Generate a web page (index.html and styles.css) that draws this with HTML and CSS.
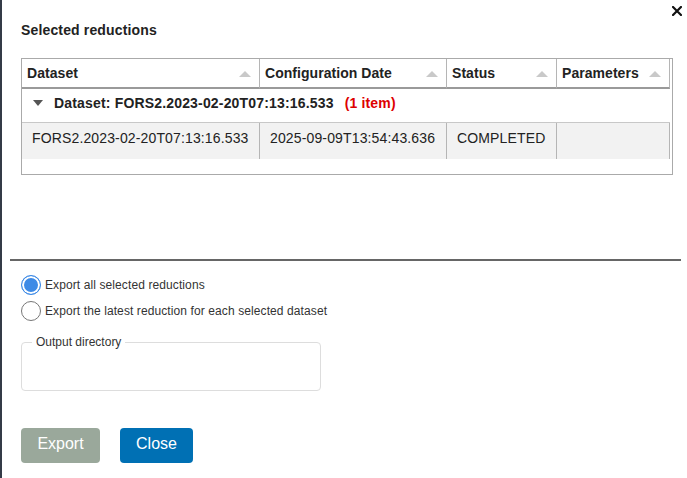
FILE: index.html
```html
<!DOCTYPE html>
<html>
<head>
<meta charset="utf-8">
<link rel="stylesheet" href="styles.css">
</head>
<body>
<div class="dialog">
  <button class="close-x" aria-label="close">
    <svg width="10" height="10" viewBox="0 0 10 10"><path d="M1 1L9 9M9 1L1 9" stroke="#111" stroke-width="2.2" stroke-linecap="square"/></svg>
  </button>
  <h2 class="title">Selected reductions</h2>
  <div class="grid-wrap">
    <div class="grid">
      <div class="hcell"><span>Dataset</span><i class="sort"></i></div>
      <div class="hcell"><span>Configuration Date</span><i class="sort"></i></div>
      <div class="hcell"><span>Status</span><i class="sort"></i></div>
      <div class="hcell"><span>Parameters</span><i class="sort"></i></div>
      <div class="group"><i class="caret"></i><span>Dataset: FORS2.2023-02-20T07:13:16.533</span><span class="count">(1 item)</span></div>
      <div class="dcell">FORS2.2023-02-20T07:13:16.533</div>
      <div class="dcell">2025-09-09T13:54:43.636</div>
      <div class="dcell">COMPLETED</div>
      <div class="dcell"></div>
    </div>
  </div>
  <hr class="divider">
  <label class="radio-row"><input type="radio" name="exp" checked><span>Export all selected reductions</span></label>
  <label class="radio-row second"><input type="radio" name="exp"><span>Export the latest reduction for each selected dataset</span></label>
  <fieldset class="outdir">
    <legend>Output directory</legend>
  </fieldset>
  <div class="actions">
    <button class="btn export">Export</button>
    <button class="btn close">Close</button>
  </div>
</div>
</body>
</html>
```
FILE: styles.css
```css
html, body {
  margin: 0;
  padding: 0;
  background: #fff;
}
body {
  font-family: "Liberation Sans", Arial, sans-serif;
  color: #222;
}
.dialog {
  position: relative;
  box-sizing: border-box;
  height: 478px;
  border-left: 2px solid #343b47;
  padding: 22px 0 0 19px;
}
.close-x {
  position: absolute;
  top: 6px;
  right: 5px;
  width: 10px;
  height: 10px;
  padding: 0;
  border: 0;
  background: none;
  display: block;
}
.close-x svg { display: block; }
.title {
  margin: 0;
  font-size: 14px;
  line-height: 16px;
  font-weight: bold;
  color: #222;
  letter-spacing: 0.15px;
}
.grid-wrap {
  margin-top: 20px;
  box-sizing: border-box;
  width: 652px;
  height: 117px;
  border: 1px solid #aaa;
}
.grid {
  display: grid;
  grid-template-columns: 238px 187px 110px 113px;
}
.hcell {
  box-sizing: border-box;
  height: 30px;
  border-right: 1px solid #b5b5b5;
  border-bottom: 2px solid #9a9a9a;
  display: flex;
  align-items: center;
  justify-content: space-between;
  padding: 0 8px 0 5px;
  font-size: 14px;
  font-weight: bold;
  color: #222;
  letter-spacing: 0.05px;
}
.sort {
  width: 0;
  height: 0;
  border-left: 6px solid transparent;
  border-right: 6px solid transparent;
  border-bottom: 6px solid #c9c9c9;
  margin-top: 2px;
}
.group {
  grid-column: 1 / -1;
  box-sizing: border-box;
  height: 34px;
  border-bottom: 1px solid #c8c8c8;
  padding: 6px 0 0 11px;
  font-size: 14px;
  line-height: 16px;
  font-weight: bold;
  color: #222;
  display: flex;
  align-items: flex-start;
  letter-spacing: 0.17px;
}
.caret {
  width: 0;
  height: 0;
  border-left: 5px solid transparent;
  border-right: 5px solid transparent;
  border-top: 6px solid #555;
  margin: 5px 11px 0 0;
}
.count {
  color: #d00;
  margin-left: 11px;
}
.dcell {
  box-sizing: border-box;
  height: 36px;
  background: #f2f2f2;
  border-right: 1px solid #b5b5b5;
  padding: 7px 0 0 10px;
  font-size: 14px;
  line-height: 16px;
  color: #222;
  white-space: nowrap;
  letter-spacing: 0.14px;
}
.divider {
  margin: 84px 0 0 -11px;
  width: 671px;
  height: 0;
  border: 0;
  border-top: 2px solid #666;
}
.radio-row {
  display: flex;
  align-items: center;
  height: 20px;
  margin-top: 14px;
  font-size: 12px;
  color: #333;
  letter-spacing: 0.1px;
}
.radio-row.second { margin-top: 6px; }
.radio-row input {
  appearance: none;
  -webkit-appearance: none;
  box-sizing: border-box;
  width: 20px;
  height: 20px;
  margin: 0 4px 0 0;
  border-radius: 50%;
  border: 1px solid #777;
  background: #fff;
}
.radio-row input:checked {
  border: 1px solid #3d8ae6;
  background: #3d8ae6;
  box-shadow: inset 0 0 0 2px #fff;
}
.outdir {
  box-sizing: border-box;
  margin: 14px 0 0 0;
  width: 300px;
  height: 56px;
  padding: 0 10px;
  border: 1px solid #ddd;
  border-radius: 4px;
}
.outdir legend {
  padding: 0 4px;
  font-size: 12px;
  line-height: 14px;
  color: #333;
}
.actions {
  display: flex;
  gap: 20px;
  margin-top: 37px;
}
.btn {
  height: 35px;
  border: 0;
  border-radius: 4px;
  color: #fff;
  font-family: "Liberation Sans", Arial, sans-serif;
  font-size: 16px;
  padding: 0 0 3px 0;
}
.btn.export { width: 79px; background: #9aa89b; }
.btn.close { width: 73px; background: #0070b4; }
```
